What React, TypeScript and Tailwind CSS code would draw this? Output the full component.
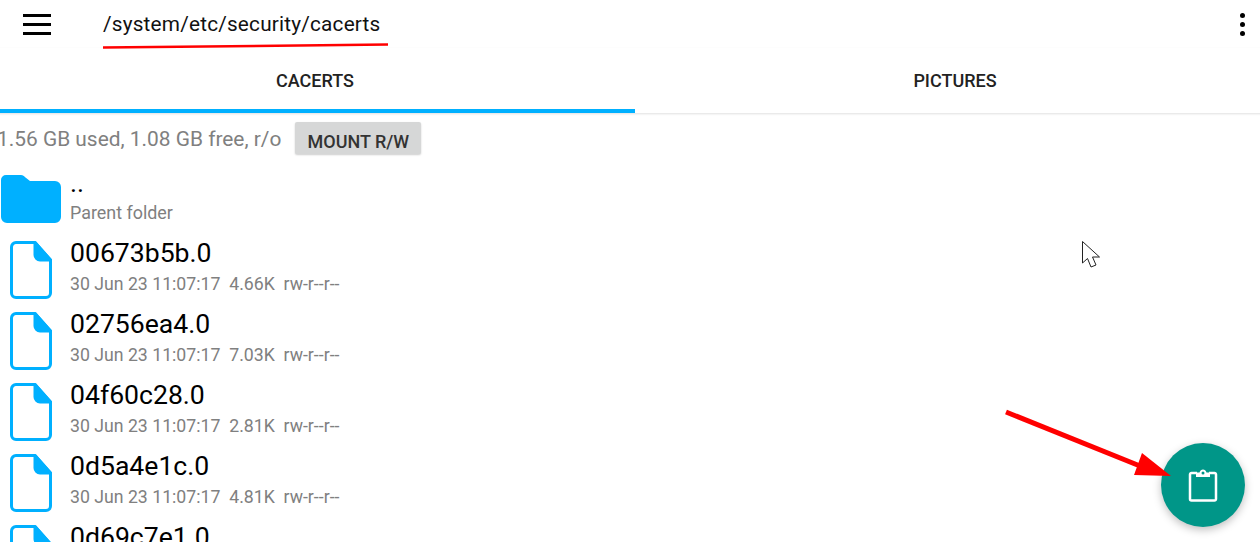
import React from 'react';

const files = [
  { name: '00673b5b.0', size: '4.66K' },
  { name: '02756ea4.0', size: '7.03K' },
  { name: '04f60c28.0', size: '2.81K' },
  { name: '0d5a4e1c.0', size: '4.81K' },
  { name: '0d69c7e1.0', size: '3.12K' },
];

const FileIcon = () => (
  <svg width="42" height="58" viewBox="0 0 42 58" className="shrink-0">
    <path
      d="M6 1.500H25L40.500 19V52A4.500 4.500 0 0 1 36 56.500H6A4.500 4.500 0 0 1 1.500 52V6A4.500 4.500 0 0 1 6 1.500Z"
      fill="none"
      stroke="#00b0ff"
      strokeWidth="3"
      strokeLinejoin="round"
    />
    <path d="M25 1.500L40.500 19H30A5 5 0 0 1 25 14Z" fill="#00b0ff" stroke="#00b0ff" strokeWidth="3" strokeLinejoin="round" />
  </svg>
);

const FolderIcon = () => (
  <svg width="60" height="48" viewBox="0 0 60 48" className="shrink-0">
    <path
      d="M5 0H20C22 0 23 1 24.500 2.500L29 6H54A6 6 0 0 1 60 12V42A6 6 0 0 1 54 48H6A6 6 0 0 1 0 42V5A5 5 0 0 1 5 0Z"
      fill="#00b0ff"
    />
  </svg>
);

export default function App() {
  return (
    <div className="relative w-[1260px] h-[542px] overflow-hidden bg-white font-['Roboto',sans-serif]">
      {/* Top bar */}
      <div className="flex items-center h-[48px] pl-[23px] pr-[15px]">
        <div className="flex flex-col gap-[6px] w-[28px]">
          <div className="h-[3px] bg-black" />
          <div className="h-[3px] bg-black" />
          <div className="h-[3px] bg-black" />
        </div>
        <span className="ml-[52px] pt-[2px] text-[20.75px] text-[#111] tracking-[0.2px]">/system/etc/security/cacerts</span>
        <div className="ml-auto flex flex-col gap-[4px]">
          <div className="w-[5px] h-[5px] rounded-full bg-black" />
          <div className="w-[5px] h-[5px] rounded-full bg-black" />
          <div className="w-[5px] h-[5px] rounded-full bg-black" />
        </div>
      </div>

      {/* Tabs */}
      <div className="flex h-[65px] -ml-[5px] w-[1280px] shadow-[0_1px_2px_rgba(0,0,0,0.12)]">
        <div className="flex-1 flex items-center justify-center pt-[3px] border-b-[4px] border-[#00b0ff] text-[18px] font-medium text-[#222]">
          CACERTS
        </div>
        <div className="flex-1 flex items-center justify-center pt-[3px] pb-[4px] text-[18px] font-medium text-[#222]">
          PICTURES
        </div>
      </div>

      {/* Storage info */}
      <div className="flex items-center h-[32px] mt-[9px] -ml-[3px]">
        <span className="pt-[4px] text-[20.9px] text-[#808080]">1.56 GB used, 1.08 GB free, r/o</span>
        <button className="ml-[14px] w-[126px] h-[32px] pt-[6px] rounded-[2px] bg-[#d6d7d7] text-[18px] font-medium text-[#333] shadow-[0_1px_2px_rgba(0,0,0,0.2)]">
          MOUNT R/W
        </button>
      </div>

      {/* File list */}
      <div className="flex items-start h-[48px] mt-[21px] pl-[1px]">
        <FolderIcon />
        <div className="-mt-[4px] ml-[9px] flex flex-col">
          <span className="text-[26.6px] leading-[24px] h-[32px] text-black">..</span>
          <span className="text-[17.9px] leading-[20px] text-[#808080]">Parent folder</span>
        </div>
      </div>
      <div className="flex flex-col gap-[13px] mt-[18px] pl-[10px]">
        {files.map((f) => (
          <div key={f.name} className="flex items-start h-[58px]">
            <FileIcon />
            <div className="-mt-[2px] ml-[18px] flex flex-col">
              <span className="text-[26.6px] leading-[28px] text-black">{f.name}</span>
              <span className="text-[17.7px] leading-[20px] mt-[7px] text-[#808080] whitespace-pre">
                {`30 Jun 23 11:07:17  ${f.size}  rw-r--r--`}
              </span>
            </div>
          </div>
        ))}
      </div>

      {/* FAB */}
      <div className="absolute left-[1161px] top-[443px] w-[84px] h-[84px] rounded-full bg-[#009688] flex items-center justify-center shadow-[0_3px_8px_rgba(0,0,0,0.25)]">
        <svg width="30" height="33" viewBox="0 0 30 33" fill="none">
          <path d="M9 4H3.500A1.500 1.500 0 0 0 2 5.500V30A1.500 1.500 0 0 0 3.500 31.500H26.500A1.500 1.500 0 0 0 28 30V5.500A1.500 1.500 0 0 0 26.500 4H21" stroke="#fff" strokeWidth="2.500" />
          <path d="M8 3.500H11.500C12 1.500 13.500 0.500 15 0.500C16.500 0.500 18 1.500 18.500 3.500H22V8H8Z" fill="#fff" />
          <circle cx="15" cy="4" r="1.500" fill="#009688" />
        </svg>
      </div>

      {/* Red annotations */}
      <svg className="absolute inset-0 pointer-events-none" width="1260" height="542" viewBox="0 0 1260 542">
        <path d="M103 47.500L388 44.500" stroke="#f00" strokeWidth="2.500" />
        <path d="M1006 412L1145 468" stroke="#f00" strokeWidth="5" />
        <path d="M1142 453L1171 476L1134 475Z" fill="#f00" />
        <path
          d="M1082.500 241.500V263L1087.500 258.500L1091 267L1096 265L1092.500 257H1099.500Z"
          fill="#fff"
          stroke="#222"
          strokeWidth="1"
        />
      </svg>
    </div>
  );
}
